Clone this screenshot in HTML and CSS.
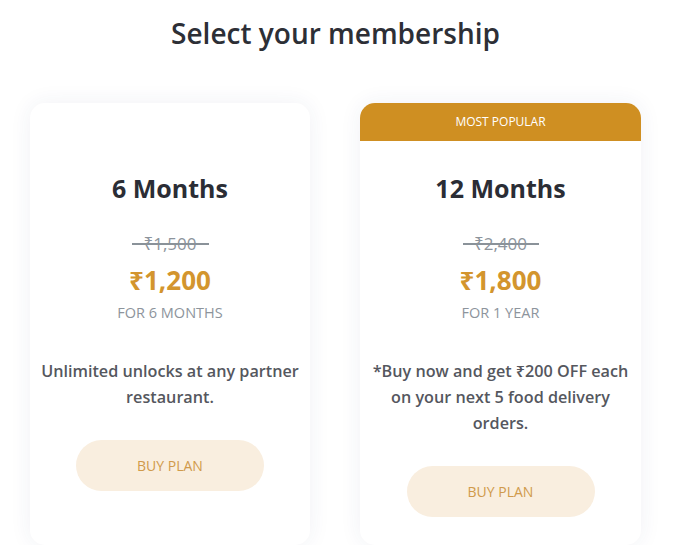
FILE: index.html
```html
<!DOCTYPE html>
<html lang="en">
  <head>
    <meta charset="UTF-8" />
    <meta name="viewport" content="width=device-width, initial-scale=1.0" />
    <title>Membership</title>
    <link rel="stylesheet" href="styles.css">
  </head>
  <body>
    <main class="page">
      <h1 class="title">Select your membership</h1>
      <div class="plans">
        <div class="plan plan--plain">
          <h2 class="plan-name">6 Months</h2>
          <div class="old-price"><s>₹1,500</s></div>
          <div class="price">₹1,200</div>
          <div class="period">For 6 months</div>
          <p class="desc">Unlimited unlocks at any partner restaurant.</p>
          <button class="buy">Buy plan</button>
        </div>
        <div class="plan">
          <div class="badge">Most popular</div>
          <h2 class="plan-name">12 Months</h2>
          <div class="old-price"><s>₹2,400</s></div>
          <div class="price">₹1,800</div>
          <div class="period">For 1 year</div>
          <p class="desc">*Buy now and get ₹200 OFF each on your next 5 food delivery orders.</p>
          <button class="buy">Buy plan</button>
        </div>
      </div>
    </main>
  </body>
</html>
```

FILE: styles.css
```css
:root {
  --gold: #cf8f22;
  --price: #d3952e;
  --ink: #2b2d35;
  --muted: #8d949c;
}

body {
  margin: 0;
  background: #ffffff;
  font-family: "Open Sans", "Noto Sans", sans-serif;
  color: var(--ink);
}

.page {
  width: 671px;
  display: flex;
  flex-direction: column;
  align-items: center;
}

.title {
  margin: 14px 0 0;
  font-size: 28px;
  line-height: 38px;
  font-weight: 600;
  color: #2d2f36;
}

.plans {
  display: grid;
  grid-template-columns: 280px 281px;
  gap: 50px;
  margin-top: 51px;
}

.plan {
  background: #fff;
  border-radius: 15px;
  box-shadow: 0 0 22px rgba(40, 60, 120, 0.07);
  display: flex;
  flex-direction: column;
  align-items: center;
  text-align: center;
  padding: 0 10px 28px;
  overflow: hidden;
}

.plan--plain {
  padding-top: 38px;
}

.badge {
  align-self: stretch;
  margin: 0 -10px;
  height: 38px;
  line-height: 38px;
  background: var(--gold);
  color: #fff;
  font-size: 12px;
  text-transform: uppercase;
}

.plan-name {
  margin: 31px 0 0;
  font-size: 25px;
  line-height: 32px;
  font-weight: 700;
}

.old-price {
  margin-top: 28px;
  font-size: 17px;
  line-height: 24px;
  color: var(--muted);
}

/* the strike runs a bit past the digits */
.old-price s {
  position: relative;
  text-decoration: none;
}

.old-price s::after {
  content: "";
  position: absolute;
  left: -11px;
  right: -12px;
  top: 11px;
  height: 2px;
  background: #8a9299;
}

.price {
  margin-top: 7px;
  font-size: 26px;
  line-height: 34px;
  font-weight: 700;
  color: var(--price);
}

.period {
  margin-top: 6px;
  font-size: 14.5px;
  line-height: 20px;
  color: var(--muted);
  text-transform: uppercase;
}

.desc {
  margin: 35px 0 0;
  font-size: 16.2px;
  line-height: 26px;
  font-weight: 600;
  color: #55575e;
}

.buy {
  margin-top: 30px;
  width: 188px;
  height: 51px;
  border: 0;
  border-radius: 26px;
  background: #f9eedf;
  color: #d09a4b;
  font-family: inherit;
  font-size: 14px;
  text-transform: uppercase;
}
```
